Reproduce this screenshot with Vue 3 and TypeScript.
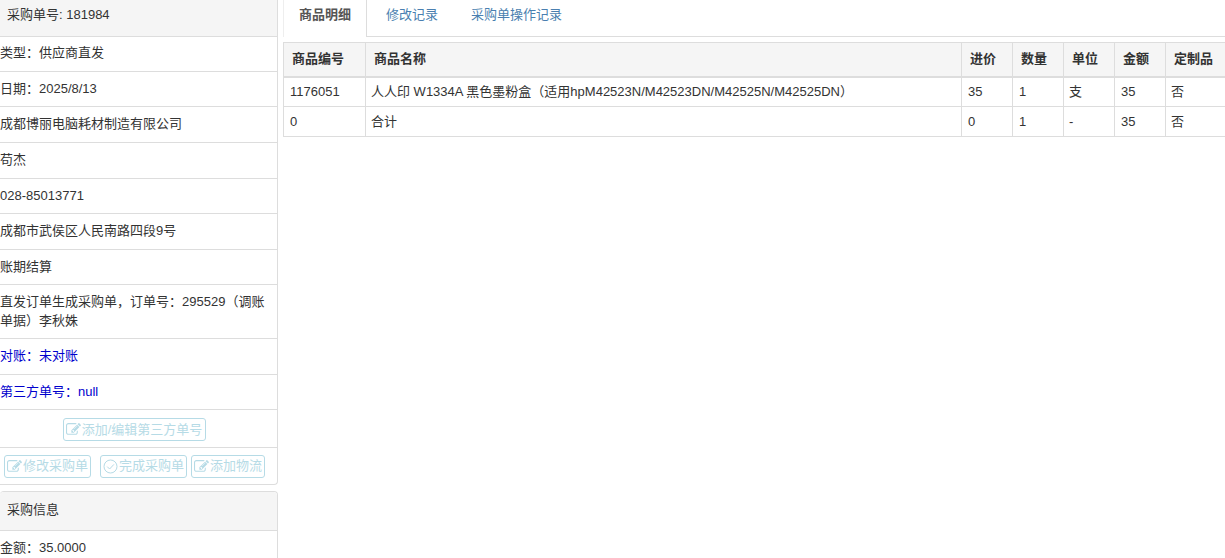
<script setup lang="ts">
interface Row { label: string; tall?: boolean; blue?: boolean }
const rows: Row[] = [
  { label: '类型：供应商直发' },
  { label: '日期：2025/8/13' },
  { label: '成都博丽电脑耗材制造有限公司' },
  { label: '苟杰' },
  { label: '028-85013771' },
  { label: '成都市武侯区人民南路四段9号' },
  { label: '账期结算' },
  { label: '直发订单生成采购单，订单号：295529（调账单据）李秋姝', tall: true },
  { label: '对账：未对账', blue: true },
  { label: '第三方单号：null', blue: true },
]
const tabs = ['商品明细', '修改记录', '采购单操作记录']
const headers = ['商品编号', '商品名称', '进价', '数量', '单位', '金额', '定制品']
const items = [
  ['1176051', '人人印 W1334A 黑色墨粉盒（适用hpM42523N/M42523DN/M42525N/M42525DN）', '35', '1', '支', '35', '否'],
  ['0', '合计', '0', '1', '-', '35', '否'],
]
const widths = [82, 596, 51, 51, 51, 51, 62]
const editPath = 'M888 1184l116-116-152-152-116 116v56h96v96h56zm440-720q-16-16-33 1l-350 350q-17 17-1 33t33-1l350-350q17-17 1-33zm80 594v190q0 119-84.500 203.500t-203.500 84.500h-832q-119 0-203.500-84.500t-84.500-203.500v-832q0-119 84.500-203.500t203.500-84.500h832q63 0 117 25 15 7 18 23 3 17-9 29l-49 49q-14 14-32 8-23-6-45-6h-832q-66 0-113 47t-47 113v832q0 66 47 113t113 47h832q66 0 113-47t47-113v-126q0-13 9-22l64-64q15-15 35-7t20 29zm-96-738l288 288-672 672h-288v-288zm444 132l-92 92-288-288 92-92q28-28 68-28t68 28l152 152q28 28 28 68t-28 68z'
</script>

<template>
  <div class="page">
    <aside class="side">
      <section class="panel first">
        <div class="heading top">采购单号: 181984</div>
        <div v-for="r in rows" :key="r.label" class="row" :class="{ blue: r.blue }">{{ r.label }}</div>
        <div class="row actions one">
          <button class="btn wide">
            <svg class="ico solid" viewBox="0 0 1792 1792"><path :d="editPath" /></svg>添加/编辑第三方单号
          </button>
        </div>
        <div class="actions two">
          <button class="btn">
            <svg class="ico solid" viewBox="0 0 1792 1792"><path :d="editPath" /></svg>修改采购单
          </button>
          <button class="btn">
            <svg class="ico" viewBox="0 0 15 15"><circle cx="7.5" cy="7.5" r="6.5" /><path d="M4.2 7.6l2.4 2.4 4.3-4.6" /></svg>完成采购单
          </button>
          <button class="btn">
            <svg class="ico solid" viewBox="0 0 1792 1792"><path :d="editPath" /></svg>添加物流
          </button>
        </div>
      </section>
      <section class="panel second">
        <div class="heading">采购信息</div>
        <div class="row">金额：35.0000</div>
      </section>
    </aside>
    <main class="main">
      <nav class="tabs">
        <a v-for="(t, i) in tabs" :key="t" class="tab" :class="{ active: i === 0 }">{{ t }}</a>
      </nav>
      <table class="grid">
        <colgroup>
          <col v-for="(w, i) in widths" :key="i" :style="{ width: w + 'px' }" />
        </colgroup>
        <thead>
          <tr><th v-for="h in headers" :key="h">{{ h }}</th></tr>
        </thead>
        <tbody>
          <tr v-for="it in items" :key="it[0]">
            <td v-for="(c, j) in it" :key="j">{{ c }}</td>
          </tr>
        </tbody>
      </table>
    </main>
  </div>
</template>

<style>
html, body { margin: 0; background: #fff; overflow: hidden; }
</style>

<style scoped>
.page {
  display: flex;
  height: 558px;
  overflow: hidden;
  font-family: "Liberation Sans", "Noto Sans CJK SC", sans-serif;
  font-size: 13px;
  line-height: 18.57px;
  color: #333;
}
.side { width: 278px; flex: none; }
.panel {
  border-right: 1px solid #ddd;
  border-bottom: 1px solid #ddd;
  border-radius: 0 0 4px 0;
  margin-bottom: 6px;
}
.second { border-top: 1px solid #ddd; border-radius: 4px 4px 0 0; margin-bottom: 0; }
.heading {
  background: #f5f5f5;
  border-bottom: 1px solid #ddd;
  padding: 9px 7px;
  height: 39px;
  box-sizing: border-box;
}
.heading.top { height: 36.6px; padding-top: 6px; }
.second .heading { border-radius: 4px 4px 0 0; }
.row {
  padding: 8px 0;
  border-bottom: 1px solid #ddd;
}
.first .row:nth-child(2) { padding-top: 7.7px; }
.blue { color: #0000cd; }
.actions { text-align: center; }
.first .one { padding: 8px 8px 4px 0; }
.two {
  display: flex;
  padding: 7px 0 6px 4px;
  gap: 4px;
}
.two .btn:first-child { margin-right: 5px; }
.btn {
  display: inline-flex;
  align-items: center;
  height: 23px;
  padding: 0 2px;
  border: 1px solid #b6dbe6;
  border-radius: 3px;
  background: #fff;
  color: #b6dbe6;
  font: inherit;
}
.btn.wide { padding-right: 3px; }
.ico {
  width: 15px;
  height: 15px;
  margin-right: 1px;
  fill: none;
  stroke: #b6dbe6;
  stroke-width: 1;
}
.ico.solid { fill: #b6dbe6; stroke: none; }
.main { flex: 1; min-width: 0; overflow: hidden; padding-left: 5px; }
.tabs {
  display: flex;
  height: 37px;
  box-sizing: border-box;
  border-bottom: 1px solid #ddd;
  margin-bottom: 5px;
}
.tab {
  padding: 6px 16px 0;
  color: #4a7fb0;
}
.tab.active {
  margin-left: 0;
  padding: 6px 15px 0 15px;
  height: 37px;
  box-sizing: border-box;
  background: #fff;
  border-right: 1px solid #ddd;
  border-left: 1px solid #eee;
  color: #555;
  font-weight: 700;
  margin-right: 3px;
}
.tab:last-child { margin-left: 1px; }
.grid {
  border-collapse: collapse;
  table-layout: fixed;
  width: 944px;
  border-left: 1px solid #ddd;
}
th, td {
  border: 1px solid #ddd;
  text-align: left;
  font-weight: 400;
  white-space: nowrap;
  overflow: hidden;
}
th {
  background: #f5f5f5;
  font-weight: 700;
  padding: 7px 8px;
  height: 34px;
  box-sizing: border-box;
  border-bottom: 2px solid #ddd;
}
td {
  padding: 5px 4px 5px 5px;
  height: 30px;
  box-sizing: border-box;
}
td:first-child { padding-left: 6px; }
td:nth-child(3), td:nth-child(4), td:nth-child(6) { padding-left: 6px; }
tr:last-child td { padding-top: 6px; padding-bottom: 4px; }
</style>
